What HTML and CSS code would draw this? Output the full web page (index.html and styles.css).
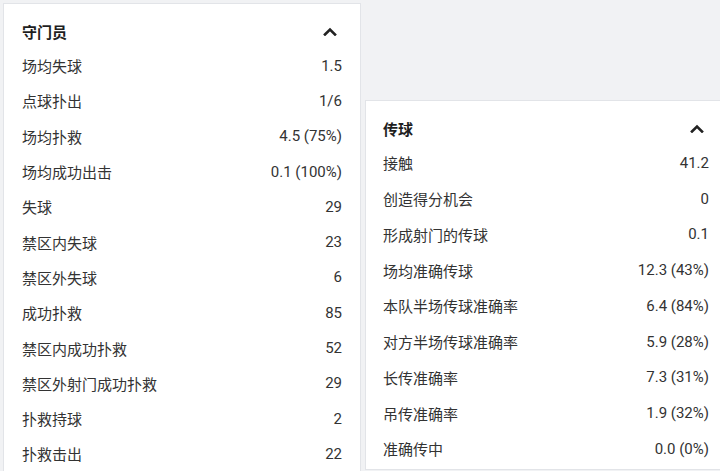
FILE: index.html
```html
<!DOCTYPE html>
<html lang="zh">
<head>
<meta charset="utf-8">
<link rel="stylesheet" href="styles.css">
</head>
<body>
<div class="page">
  <section class="card card-left">
    <div class="card-head">
      <span class="title">守门员</span>
      <svg class="chev" width="14" height="9" viewBox="0 0 14 9"><path d="M2 7.5 L7 2.5 L12 7.5" fill="none" stroke="#222" stroke-width="2.6" stroke-linecap="square"/></svg>
    </div>
    <div class="row"><span>场均失球</span><span>1.5</span></div>
    <div class="row"><span>点球扑出</span><span>1/6</span></div>
    <div class="row"><span>场均扑救</span><span>4.5 (75%)</span></div>
    <div class="row"><span>场均成功出击</span><span>0.1 (100%)</span></div>
    <div class="row"><span>失球</span><span>29</span></div>
    <div class="row"><span>禁区内失球</span><span>23</span></div>
    <div class="row"><span>禁区外失球</span><span>6</span></div>
    <div class="row"><span>成功扑救</span><span>85</span></div>
    <div class="row"><span>禁区内成功扑救</span><span>52</span></div>
    <div class="row"><span>禁区外射门成功扑救</span><span>29</span></div>
    <div class="row"><span>扑救持球</span><span>2</span></div>
    <div class="row"><span>扑救击出</span><span>22</span></div>
  </section>
  <section class="card card-right">
    <div class="card-head">
      <span class="title">传球</span>
      <svg class="chev" width="14" height="9" viewBox="0 0 14 9"><path d="M2 7.5 L7 2.5 L12 7.5" fill="none" stroke="#222" stroke-width="2.6" stroke-linecap="square"/></svg>
    </div>
    <div class="row"><span>接触</span><span>41.2</span></div>
    <div class="row"><span>创造得分机会</span><span>0</span></div>
    <div class="row"><span>形成射门的传球</span><span>0.1</span></div>
    <div class="row"><span>场均准确传球</span><span>12.3 (43%)</span></div>
    <div class="row"><span>本队半场传球准确率</span><span>6.4 (84%)</span></div>
    <div class="row"><span>对方半场传球准确率</span><span>5.9 (28%)</span></div>
    <div class="row"><span>长传准确率</span><span>7.3 (31%)</span></div>
    <div class="row"><span>吊传准确率</span><span>1.9 (32%)</span></div>
    <div class="row"><span>准确传中</span><span>0.0 (0%)</span></div>
  </section>
</div>
</body>
</html>
```
FILE: styles.css
```css
html, body {
  margin: 0;
  padding: 0;
  background: #f1f2f4;
  overflow: hidden;
}
body {
  width: 720px;
  height: 471px;
  font-family: Roboto, "Noto Sans CJK SC", sans-serif;
  color: #333;
}
.page {
  display: flex;
  align-items: flex-start;
  gap: 4px;
  padding: 3px 0 0 3px;
  width: 720px;
  box-sizing: border-box;
}
.card {
  background: #fff;
  border: 1px solid #e2e4e8;
  box-sizing: border-box;
}
.card-left {
  flex: none;
  width: 358px;
  padding: 11px 18px 0 18px;
  height: 480px;
}
.card-right {
  flex: 1;
  border-right: 0;
  margin-top: 97px;
  padding: 11px 11px 2px 17px;
}
.card-head {
  height: 33px;
  display: flex;
  align-items: center;
  justify-content: space-between;
}
.title {
  font-size: 15px;
  font-weight: 700;
  color: #1e1e1e;
}
.chev {
  margin-right: 5px;
  margin-top: -1px;
}
.row {
  display: flex;
  align-items: center;
  justify-content: space-between;
  font-size: 15px;
  color: #333;
}
.card-left .row { height: 35.3px; }
.card-right .row { height: 35.75px; }
```
